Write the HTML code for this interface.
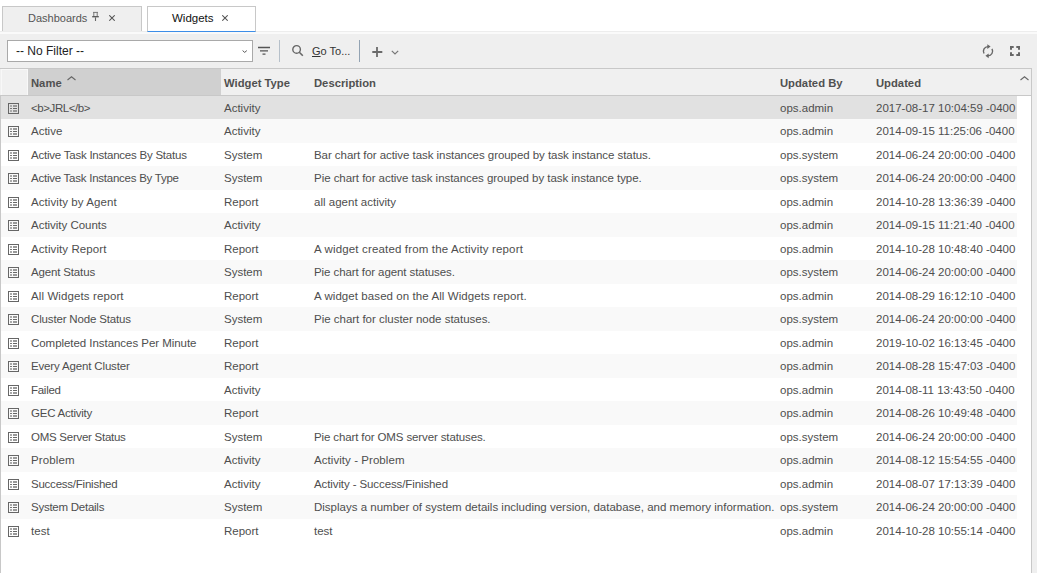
<!DOCTYPE html>
<html><head><meta charset="utf-8">
<style>
*{box-sizing:border-box;margin:0;padding:0}
html,body{width:1037px;height:573px;overflow:hidden;background:#fff;font-family:"Liberation Sans",sans-serif;position:relative}
.abs{position:absolute}
.tab{position:absolute;top:6px;height:25px;border:1px solid #c8c8c8;border-bottom:none;font-size:11px;white-space:nowrap}
.tab1{left:2px;width:140px;background:#efefef;color:#555}
.tab2{left:147px;width:109px;background:#fff;color:#111;height:26px;border-bottom:1px solid #3d8ee8}
.tabtxt{position:absolute;top:0;line-height:23px}
.toolbar{position:absolute;left:0;top:32px;width:1037px;height:541px;background:#efefef;border-top:2px solid #fafafa}
.filter{position:absolute;left:7px;top:40px;width:246px;height:22px;background:#fff;border:1px solid #a9a9a9;font-size:12px;color:#222}
.sep{position:absolute;top:40px;width:1px;height:22px}
.grid{position:absolute;left:0;top:68px;width:1032px;height:520px;background:#fff;border:1px solid #c8c8c8;border-bottom:none}
.hdr{position:absolute;left:0;top:69px;width:1031px;height:27px;background:#f0f0f0;border-bottom:1px solid #c8c8c8}
.h{position:absolute;top:69px;line-height:26px;padding-top:1px;font-size:11.25px;font-weight:bold;color:#505050;white-space:nowrap}
.row{position:absolute;left:1px;width:1016px;font-size:11.5px;color:#4e4e4e;white-space:nowrap}
.row.alt{background:#f9f9f9}
.row.sel{background:#e1e1e1}
.row span{position:absolute;top:1.1px;line-height:23.5px}
.ic{position:absolute;left:7px;top:7px}
.c1{left:30px} .c2{left:223px} .c3{left:313px} .c4{left:779px} .c5{left:875px}
</style></head><body>
<div class="toolbar"></div><div class="abs" style="left:0;top:31px;width:1037px;height:1px;background:#ededed"></div>
<div class="tab tab1"><span class="tabtxt" style="left:25px">Dashboards</span>
<svg class="abs" style="left:89px;top:4px" width="8" height="11" viewBox="0 0 8 11"><path d="M1 1.4H6M1.8 1.4V5.2M5.2 1.4V5.2" stroke="#777" stroke-width="1" fill="none"/><path d="M0.2 5.7H6.8" stroke="#555" stroke-width="1.3"/><path d="M3.5 6.3V10" stroke="#666" stroke-width="1.1"/></svg>
<svg class="abs" style="left:105.5px;top:8px" width="6" height="6" viewBox="0 0 6 6"><path d="M0.3 0.3L5.7 5.7M5.7 0.3L0.3 5.7" stroke="#555" stroke-width="1.05"/></svg>
</div>
<div class="tab tab2"><span class="tabtxt" style="left:24px;font-size:11.5px">Widgets</span>
<svg class="abs" style="left:73.5px;top:8px" width="6" height="6" viewBox="0 0 6 6"><path d="M0.3 0.3L5.7 5.7M5.7 0.3L0.3 5.7" stroke="#555" stroke-width="1.05"/></svg>
</div>
<div class="filter"><span class="abs" style="left:8px;top:0;line-height:20px">-- No Filter --</span>
<svg class="abs" style="left:234px;top:9px" width="6" height="4" viewBox="0 0 6 4"><path d="M0.6 0.6L2.7 2.4L4.8 0.6" stroke="#555" stroke-width="1" fill="none"/></svg>
</div>
<svg class="abs" style="left:258px;top:46px" width="13" height="10" viewBox="0 0 13 10"><path d="M0 1.5H12M2 4.8H10M4.5 8.2H7.5" stroke="#555" stroke-width="1.3" fill="none"/></svg>
<div class="sep" style="left:279px;background:#b6c0ca"></div>
<svg class="abs" style="left:291px;top:44px" width="14" height="14" viewBox="0 0 14 14"><circle cx="5.6" cy="5.4" r="3.8" stroke="#666" stroke-width="1.4" fill="none"/><path d="M8.3 8.2L11.8 11.8" stroke="#666" stroke-width="1.6"/></svg>
<span class="abs" style="left:312px;top:43px;font-size:11px;line-height:17px;color:#333"><u style="text-decoration-thickness:1px;text-underline-offset:1px">G</u>o To...</span>
<div class="sep" style="left:359px;background:#93a3b3"></div>
<svg class="abs" style="left:371.5px;top:47px" width="11" height="11" viewBox="0 0 11 11"><path d="M0.3 5H10.3M5 0V10" stroke="#6a6a6a" stroke-width="1.8" fill="none"/></svg>
<svg class="abs" style="left:391px;top:50px" width="8" height="5" viewBox="0 0 8 5"><path d="M0.8 0.8L4 4L7.2 0.8" stroke="#777" stroke-width="1.2" fill="none"/></svg>
<svg class="abs" style="left:981px;top:43px" width="14" height="16" viewBox="0 0 14 16"><path d="M7 3.6A4.6 4.6 0 0 0 3.02 10.5" stroke="#666" stroke-width="1.4" fill="none"/><path d="M7 12.8A4.6 4.6 0 0 0 10.98 5.9" stroke="#666" stroke-width="1.4" fill="none"/><path d="M6.3 1.2L9.6 3.6L6.3 6Z" fill="#666"/><path d="M7.7 10.4L4.4 12.8L7.7 15.2Z" fill="#666"/></svg>
<svg class="abs" style="left:1010px;top:46px" width="10" height="10" viewBox="0 0 10 10"><path d="M1 3.7V1H3.7M6.3 1H9V3.7M9 6.3V9H6.3M3.7 9H1V6.3" stroke="#666" stroke-width="2" fill="none"/></svg>
<div class="grid"></div>
<div class="hdr"></div>
<div class="abs" style="left:1px;top:69px;width:27px;height:26px;background:#f0f0f0;border-top:1px solid #f8f8f8;border-left:1px solid #f8f8f8;border-right:1px solid #f8f8f8"></div>
<div class="abs" style="left:28px;top:69px;width:193px;height:26px;background:#d0d0d0"></div>
<span class="h" style="left:31px">Name</span>
<svg class="abs" style="left:67px;top:75.5px" width="9" height="5" viewBox="0 0 9 5"><path d="M0.5 4L4.5 0.8L8.5 4" stroke="#666" stroke-width="1.1" fill="none"/></svg>
<span class="h" style="left:224px">Widget Type</span>
<span class="h" style="left:314px">Description</span>
<span class="h" style="left:780px">Updated By</span>
<span class="h" style="left:876px">Updated</span>
<svg class="abs" style="left:1020px;top:75.5px" width="9" height="5" viewBox="0 0 9 5"><path d="M0.5 4L4.5 0.8L8.5 4" stroke="#666" stroke-width="1.1" fill="none"/></svg>
<div class="row sel" style="top:96px;height:23px"><svg class="ic" width="11" height="11" viewBox="0 0 11 11" shape-rendering="crispEdges"><rect x="0.5" y="0.5" width="10" height="10" fill="none" stroke="#666" stroke-width="1"/><rect x="2" y="2" width="2" height="2" fill="#aaa"/><rect x="5" y="2" width="4" height="2" fill="#999"/><rect x="2" y="5" width="2" height="1" fill="#777"/><rect x="5" y="5" width="4" height="1" fill="#666"/><rect x="2" y="7" width="2" height="2" fill="#aaa"/><rect x="5" y="7" width="4" height="2" fill="#999"/></svg><span class="c1" style="letter-spacing:-0.422px">&lt;b&gt;JRL&lt;/b&gt;</span><span class="c2">Activity</span><span class="c3" style="letter-spacing:0.000px"></span><span class="c4">ops.admin</span><span class="c5">2017-08-17 10:04:59 -0400</span></div><div class="row alt" style="top:119px;height:24px"><svg class="ic" width="11" height="11" viewBox="0 0 11 11" shape-rendering="crispEdges"><rect x="0.5" y="0.5" width="10" height="10" fill="none" stroke="#666" stroke-width="1"/><rect x="2" y="2" width="2" height="2" fill="#aaa"/><rect x="5" y="2" width="4" height="2" fill="#999"/><rect x="2" y="5" width="2" height="1" fill="#777"/><rect x="5" y="5" width="4" height="1" fill="#666"/><rect x="2" y="7" width="2" height="2" fill="#aaa"/><rect x="5" y="7" width="4" height="2" fill="#999"/></svg><span class="c1" style="letter-spacing:0.000px">Active</span><span class="c2">Activity</span><span class="c3" style="letter-spacing:0.000px"></span><span class="c4">ops.admin</span><span class="c5">2014-09-15 11:25:06 -0400</span></div><div class="row" style="top:143px;height:23px"><svg class="ic" width="11" height="11" viewBox="0 0 11 11" shape-rendering="crispEdges"><rect x="0.5" y="0.5" width="10" height="10" fill="none" stroke="#666" stroke-width="1"/><rect x="2" y="2" width="2" height="2" fill="#aaa"/><rect x="5" y="2" width="4" height="2" fill="#999"/><rect x="2" y="5" width="2" height="1" fill="#777"/><rect x="5" y="5" width="4" height="1" fill="#666"/><rect x="2" y="7" width="2" height="2" fill="#aaa"/><rect x="5" y="7" width="4" height="2" fill="#999"/></svg><span class="c1" style="letter-spacing:-0.230px">Active Task Instances By Status</span><span class="c2">System</span><span class="c3" style="letter-spacing:-0.055px">Bar chart for active task instances grouped by task instance status.</span><span class="c4">ops.system</span><span class="c5">2014-06-24 20:00:00 -0400</span></div><div class="row alt" style="top:166px;height:24px"><svg class="ic" width="11" height="11" viewBox="0 0 11 11" shape-rendering="crispEdges"><rect x="0.5" y="0.5" width="10" height="10" fill="none" stroke="#666" stroke-width="1"/><rect x="2" y="2" width="2" height="2" fill="#aaa"/><rect x="5" y="2" width="4" height="2" fill="#999"/><rect x="2" y="5" width="2" height="1" fill="#777"/><rect x="5" y="5" width="4" height="1" fill="#666"/><rect x="2" y="7" width="2" height="2" fill="#aaa"/><rect x="5" y="7" width="4" height="2" fill="#999"/></svg><span class="c1" style="letter-spacing:-0.246px">Active Task Instances By Type</span><span class="c2">System</span><span class="c3" style="letter-spacing:-0.042px">Pie chart for active task instances grouped by task instance type.</span><span class="c4">ops.system</span><span class="c5">2014-06-24 20:00:00 -0400</span></div><div class="row" style="top:190px;height:23px"><svg class="ic" width="11" height="11" viewBox="0 0 11 11" shape-rendering="crispEdges"><rect x="0.5" y="0.5" width="10" height="10" fill="none" stroke="#666" stroke-width="1"/><rect x="2" y="2" width="2" height="2" fill="#aaa"/><rect x="5" y="2" width="4" height="2" fill="#999"/><rect x="2" y="5" width="2" height="1" fill="#777"/><rect x="5" y="5" width="4" height="1" fill="#666"/><rect x="2" y="7" width="2" height="2" fill="#aaa"/><rect x="5" y="7" width="4" height="2" fill="#999"/></svg><span class="c1" style="letter-spacing:0.075px">Activity by Agent</span><span class="c2">Report</span><span class="c3" style="letter-spacing:0.012px">all agent activity</span><span class="c4">ops.admin</span><span class="c5">2014-10-28 13:36:39 -0400</span></div><div class="row alt" style="top:213px;height:24px"><svg class="ic" width="11" height="11" viewBox="0 0 11 11" shape-rendering="crispEdges"><rect x="0.5" y="0.5" width="10" height="10" fill="none" stroke="#666" stroke-width="1"/><rect x="2" y="2" width="2" height="2" fill="#aaa"/><rect x="5" y="2" width="4" height="2" fill="#999"/><rect x="2" y="5" width="2" height="1" fill="#777"/><rect x="5" y="5" width="4" height="1" fill="#666"/><rect x="2" y="7" width="2" height="2" fill="#aaa"/><rect x="5" y="7" width="4" height="2" fill="#999"/></svg><span class="c1" style="letter-spacing:-0.021px">Activity Counts</span><span class="c2">Activity</span><span class="c3" style="letter-spacing:0.000px"></span><span class="c4">ops.admin</span><span class="c5">2014-09-15 11:21:40 -0400</span></div><div class="row" style="top:237px;height:23px"><svg class="ic" width="11" height="11" viewBox="0 0 11 11" shape-rendering="crispEdges"><rect x="0.5" y="0.5" width="10" height="10" fill="none" stroke="#666" stroke-width="1"/><rect x="2" y="2" width="2" height="2" fill="#aaa"/><rect x="5" y="2" width="4" height="2" fill="#999"/><rect x="2" y="5" width="2" height="1" fill="#777"/><rect x="5" y="5" width="4" height="1" fill="#666"/><rect x="2" y="7" width="2" height="2" fill="#aaa"/><rect x="5" y="7" width="4" height="2" fill="#999"/></svg><span class="c1" style="letter-spacing:0.093px">Activity Report</span><span class="c2">Report</span><span class="c3" style="letter-spacing:0.155px">A widget created from the Activity report</span><span class="c4">ops.admin</span><span class="c5">2014-10-28 10:48:40 -0400</span></div><div class="row alt" style="top:260px;height:24px"><svg class="ic" width="11" height="11" viewBox="0 0 11 11" shape-rendering="crispEdges"><rect x="0.5" y="0.5" width="10" height="10" fill="none" stroke="#666" stroke-width="1"/><rect x="2" y="2" width="2" height="2" fill="#aaa"/><rect x="5" y="2" width="4" height="2" fill="#999"/><rect x="2" y="5" width="2" height="1" fill="#777"/><rect x="5" y="5" width="4" height="1" fill="#666"/><rect x="2" y="7" width="2" height="2" fill="#aaa"/><rect x="5" y="7" width="4" height="2" fill="#999"/></svg><span class="c1" style="letter-spacing:-0.155px">Agent Status</span><span class="c2">System</span><span class="c3" style="letter-spacing:-0.079px">Pie chart for agent statuses.</span><span class="c4">ops.system</span><span class="c5">2014-06-24 20:00:00 -0400</span></div><div class="row" style="top:284px;height:23px"><svg class="ic" width="11" height="11" viewBox="0 0 11 11" shape-rendering="crispEdges"><rect x="0.5" y="0.5" width="10" height="10" fill="none" stroke="#666" stroke-width="1"/><rect x="2" y="2" width="2" height="2" fill="#aaa"/><rect x="5" y="2" width="4" height="2" fill="#999"/><rect x="2" y="5" width="2" height="1" fill="#777"/><rect x="5" y="5" width="4" height="1" fill="#666"/><rect x="2" y="7" width="2" height="2" fill="#aaa"/><rect x="5" y="7" width="4" height="2" fill="#999"/></svg><span class="c1" style="letter-spacing:0.106px">All Widgets report</span><span class="c2">Report</span><span class="c3" style="letter-spacing:0.077px">A widget based on the All Widgets report.</span><span class="c4">ops.admin</span><span class="c5">2014-08-29 16:12:10 -0400</span></div><div class="row alt" style="top:307px;height:24px"><svg class="ic" width="11" height="11" viewBox="0 0 11 11" shape-rendering="crispEdges"><rect x="0.5" y="0.5" width="10" height="10" fill="none" stroke="#666" stroke-width="1"/><rect x="2" y="2" width="2" height="2" fill="#aaa"/><rect x="5" y="2" width="4" height="2" fill="#999"/><rect x="2" y="5" width="2" height="1" fill="#777"/><rect x="5" y="5" width="4" height="1" fill="#666"/><rect x="2" y="7" width="2" height="2" fill="#aaa"/><rect x="5" y="7" width="4" height="2" fill="#999"/></svg><span class="c1" style="letter-spacing:-0.156px">Cluster Node Status</span><span class="c2">System</span><span class="c3" style="letter-spacing:-0.014px">Pie chart for cluster node statuses.</span><span class="c4">ops.system</span><span class="c5">2014-06-24 20:00:00 -0400</span></div><div class="row" style="top:331px;height:23px"><svg class="ic" width="11" height="11" viewBox="0 0 11 11" shape-rendering="crispEdges"><rect x="0.5" y="0.5" width="10" height="10" fill="none" stroke="#666" stroke-width="1"/><rect x="2" y="2" width="2" height="2" fill="#aaa"/><rect x="5" y="2" width="4" height="2" fill="#999"/><rect x="2" y="5" width="2" height="1" fill="#777"/><rect x="5" y="5" width="4" height="1" fill="#666"/><rect x="2" y="7" width="2" height="2" fill="#aaa"/><rect x="5" y="7" width="4" height="2" fill="#999"/></svg><span class="c1" style="letter-spacing:-0.048px">Completed Instances Per Minute</span><span class="c2">Report</span><span class="c3" style="letter-spacing:0.000px"></span><span class="c4">ops.admin</span><span class="c5">2019-10-02 16:13:45 -0400</span></div><div class="row alt" style="top:354px;height:24px"><svg class="ic" width="11" height="11" viewBox="0 0 11 11" shape-rendering="crispEdges"><rect x="0.5" y="0.5" width="10" height="10" fill="none" stroke="#666" stroke-width="1"/><rect x="2" y="2" width="2" height="2" fill="#aaa"/><rect x="5" y="2" width="4" height="2" fill="#999"/><rect x="2" y="5" width="2" height="1" fill="#777"/><rect x="5" y="5" width="4" height="1" fill="#666"/><rect x="2" y="7" width="2" height="2" fill="#aaa"/><rect x="5" y="7" width="4" height="2" fill="#999"/></svg><span class="c1" style="letter-spacing:-0.156px">Every Agent Cluster</span><span class="c2">Report</span><span class="c3" style="letter-spacing:0.000px"></span><span class="c4">ops.admin</span><span class="c5">2014-08-28 15:47:03 -0400</span></div><div class="row" style="top:378px;height:23px"><svg class="ic" width="11" height="11" viewBox="0 0 11 11" shape-rendering="crispEdges"><rect x="0.5" y="0.5" width="10" height="10" fill="none" stroke="#666" stroke-width="1"/><rect x="2" y="2" width="2" height="2" fill="#aaa"/><rect x="5" y="2" width="4" height="2" fill="#999"/><rect x="2" y="5" width="2" height="1" fill="#777"/><rect x="5" y="5" width="4" height="1" fill="#666"/><rect x="2" y="7" width="2" height="2" fill="#aaa"/><rect x="5" y="7" width="4" height="2" fill="#999"/></svg><span class="c1" style="letter-spacing:-0.280px">Failed</span><span class="c2">Activity</span><span class="c3" style="letter-spacing:0.000px"></span><span class="c4">ops.admin</span><span class="c5">2014-08-11 13:43:50 -0400</span></div><div class="row alt" style="top:401px;height:24px"><svg class="ic" width="11" height="11" viewBox="0 0 11 11" shape-rendering="crispEdges"><rect x="0.5" y="0.5" width="10" height="10" fill="none" stroke="#666" stroke-width="1"/><rect x="2" y="2" width="2" height="2" fill="#aaa"/><rect x="5" y="2" width="4" height="2" fill="#999"/><rect x="2" y="5" width="2" height="1" fill="#777"/><rect x="5" y="5" width="4" height="1" fill="#666"/><rect x="2" y="7" width="2" height="2" fill="#aaa"/><rect x="5" y="7" width="4" height="2" fill="#999"/></svg><span class="c1" style="letter-spacing:-0.245px">GEC Activity</span><span class="c2">Report</span><span class="c3" style="letter-spacing:0.000px"></span><span class="c4">ops.admin</span><span class="c5">2014-08-26 10:49:48 -0400</span></div><div class="row" style="top:425px;height:23px"><svg class="ic" width="11" height="11" viewBox="0 0 11 11" shape-rendering="crispEdges"><rect x="0.5" y="0.5" width="10" height="10" fill="none" stroke="#666" stroke-width="1"/><rect x="2" y="2" width="2" height="2" fill="#aaa"/><rect x="5" y="2" width="4" height="2" fill="#999"/><rect x="2" y="5" width="2" height="1" fill="#777"/><rect x="5" y="5" width="4" height="1" fill="#666"/><rect x="2" y="7" width="2" height="2" fill="#aaa"/><rect x="5" y="7" width="4" height="2" fill="#999"/></svg><span class="c1" style="letter-spacing:-0.263px">OMS Server Status</span><span class="c2">System</span><span class="c3" style="letter-spacing:-0.121px">Pie chart for OMS server statuses.</span><span class="c4">ops.system</span><span class="c5">2014-06-24 20:00:00 -0400</span></div><div class="row alt" style="top:448px;height:24px"><svg class="ic" width="11" height="11" viewBox="0 0 11 11" shape-rendering="crispEdges"><rect x="0.5" y="0.5" width="10" height="10" fill="none" stroke="#666" stroke-width="1"/><rect x="2" y="2" width="2" height="2" fill="#aaa"/><rect x="5" y="2" width="4" height="2" fill="#999"/><rect x="2" y="5" width="2" height="1" fill="#777"/><rect x="5" y="5" width="4" height="1" fill="#666"/><rect x="2" y="7" width="2" height="2" fill="#aaa"/><rect x="5" y="7" width="4" height="2" fill="#999"/></svg><span class="c1" style="letter-spacing:0.133px">Problem</span><span class="c2">Activity</span><span class="c3" style="letter-spacing:0.059px">Activity - Problem</span><span class="c4">ops.admin</span><span class="c5">2014-08-12 15:54:55 -0400</span></div><div class="row" style="top:472px;height:23px"><svg class="ic" width="11" height="11" viewBox="0 0 11 11" shape-rendering="crispEdges"><rect x="0.5" y="0.5" width="10" height="10" fill="none" stroke="#666" stroke-width="1"/><rect x="2" y="2" width="2" height="2" fill="#aaa"/><rect x="5" y="2" width="4" height="2" fill="#999"/><rect x="2" y="5" width="2" height="1" fill="#777"/><rect x="5" y="5" width="4" height="1" fill="#666"/><rect x="2" y="7" width="2" height="2" fill="#aaa"/><rect x="5" y="7" width="4" height="2" fill="#999"/></svg><span class="c1" style="letter-spacing:-0.233px">Success/Finished</span><span class="c2">Activity</span><span class="c3" style="letter-spacing:-0.104px">Activity - Success/Finished</span><span class="c4">ops.admin</span><span class="c5">2014-08-07 17:13:39 -0400</span></div><div class="row alt" style="top:495px;height:24px"><svg class="ic" width="11" height="11" viewBox="0 0 11 11" shape-rendering="crispEdges"><rect x="0.5" y="0.5" width="10" height="10" fill="none" stroke="#666" stroke-width="1"/><rect x="2" y="2" width="2" height="2" fill="#aaa"/><rect x="5" y="2" width="4" height="2" fill="#999"/><rect x="2" y="5" width="2" height="1" fill="#777"/><rect x="5" y="5" width="4" height="1" fill="#666"/><rect x="2" y="7" width="2" height="2" fill="#aaa"/><rect x="5" y="7" width="4" height="2" fill="#999"/></svg><span class="c1" style="letter-spacing:-0.254px">System Details</span><span class="c2">System</span><span class="c3" style="letter-spacing:0.002px">Displays a number of system details including version, database, and memory information.</span><span class="c4">ops.system</span><span class="c5">2014-06-24 20:00:00 -0400</span></div><div class="row" style="top:519px;height:23px"><svg class="ic" width="11" height="11" viewBox="0 0 11 11" shape-rendering="crispEdges"><rect x="0.5" y="0.5" width="10" height="10" fill="none" stroke="#666" stroke-width="1"/><rect x="2" y="2" width="2" height="2" fill="#aaa"/><rect x="5" y="2" width="4" height="2" fill="#999"/><rect x="2" y="5" width="2" height="1" fill="#777"/><rect x="5" y="5" width="4" height="1" fill="#666"/><rect x="2" y="7" width="2" height="2" fill="#aaa"/><rect x="5" y="7" width="4" height="2" fill="#999"/></svg><span class="c1" style="letter-spacing:0.067px">test</span><span class="c2">Report</span><span class="c3" style="letter-spacing:-0.067px">test</span><span class="c4">ops.admin</span><span class="c5">2014-10-28 10:55:14 -0400</span></div>
</body></html>
